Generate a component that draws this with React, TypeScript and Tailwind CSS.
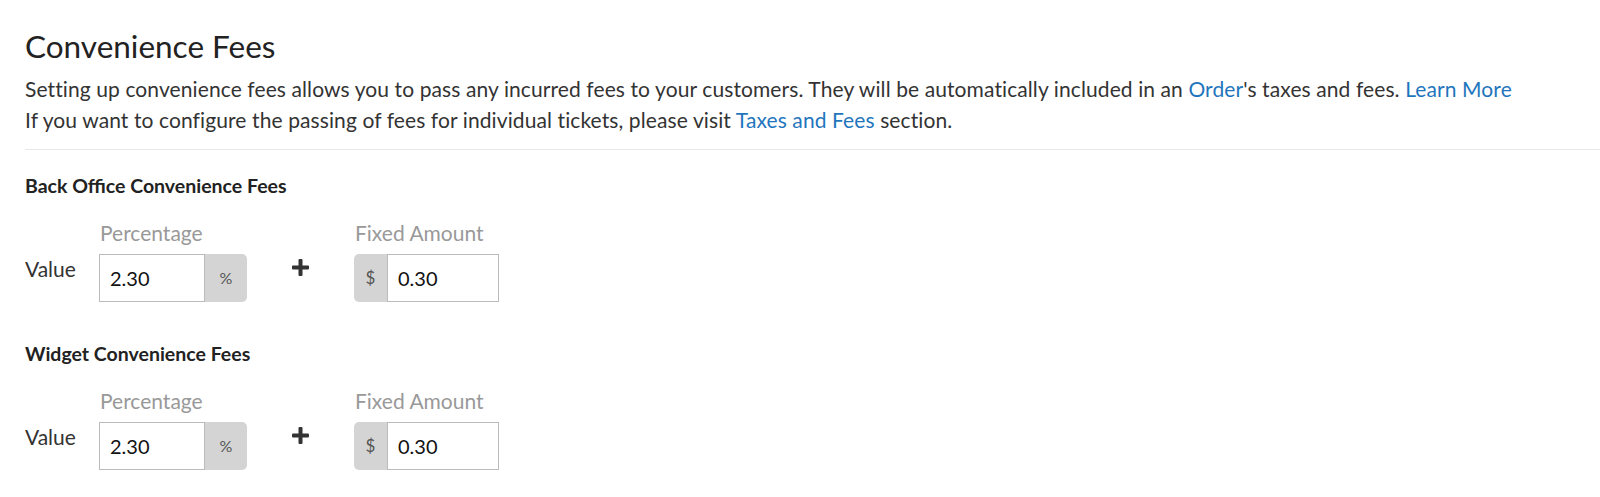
import React from "react";

const link = "text-[#1f76bd]";

function FeeSection({ title, className }: { title: string; className?: string }) {
  return (
    <div className={className}>
      <h2 className="text-[19.5px] leading-[24px] font-bold text-[#222]">{title}</h2>
      <div className="mt-[23px] grid grid-cols-[74px_148px_107px_145px] grid-rows-[24px_48px] gap-y-[9px]">
        <div />
        <div className="pl-[1px] text-[21px] leading-[24px] text-[#999]">Percentage</div>
        <div />
        <div className="pl-[1px] text-[21px] leading-[24px] text-[#999]">Fixed Amount</div>

        <div className="pt-[3px] text-[21px] leading-[24px] text-[#333]">Value</div>
        <div className="flex h-[48px]">
          <input
            defaultValue="2.30"
            className="w-[106px] h-full border border-[#bbb] bg-white px-[10px] text-[20px] text-[#111] outline-none"
          />
          <span className="flex w-[42px] items-center justify-center rounded-r-[5px] bg-[#d4d4d4] text-[16px] text-[#555]">
            %
          </span>
        </div>
        <div className="flex items-start justify-center pt-[5px] pr-[1px]">
          <svg width="17" height="17" viewBox="0 0 17 17">
            <rect x="0" y="6.5" width="17" height="4" rx="1" fill="#333" />
            <rect x="6.5" y="0" width="4" height="17" rx="1" fill="#333" />
          </svg>
        </div>
        <div className="flex h-[48px]">
          <span className="flex w-[33px] items-center justify-center rounded-l-[5px] bg-[#d4d4d4] text-[17px] text-[#555]">
            $
          </span>
          <input
            defaultValue="0.30"
            className="w-[112px] h-full border border-[#bbb] bg-white px-[10px] text-[20px] text-[#111] outline-none"
          />
        </div>
      </div>
    </div>
  );
}

export default function App() {
  return (
    <div className="min-h-[497px] bg-white pl-[25px] pt-[28px] font-['Source_Sans_Pro','Lato',sans-serif] text-[#333]">
      <h1 className="text-[31.5px] leading-[36px] text-[#222]">Convenience Fees</h1>
      <p className="mt-[9px] text-[21px] leading-[31px] tracking-[0.1px] text-[#333]">
        Setting up convenience fees allows you to pass any incurred fees to your customers. They will be
        automatically included in an <a className={link}>Order</a>'s taxes and fees.{" "}
        <a className={link}>Learn More</a>
        <br />
        If you want to configure the passing of fees for individual tickets, please visit{" "}
        <a className={link}>Taxes and Fees</a> section.
      </p>
      <div className="mt-[14px] border-t border-[#e8e8e8]" />
      <FeeSection title="Back Office Convenience Fees" className="mt-[24px]" />
      <FeeSection title="Widget Convenience Fees" className="mt-[40px]" />
    </div>
  );
}
